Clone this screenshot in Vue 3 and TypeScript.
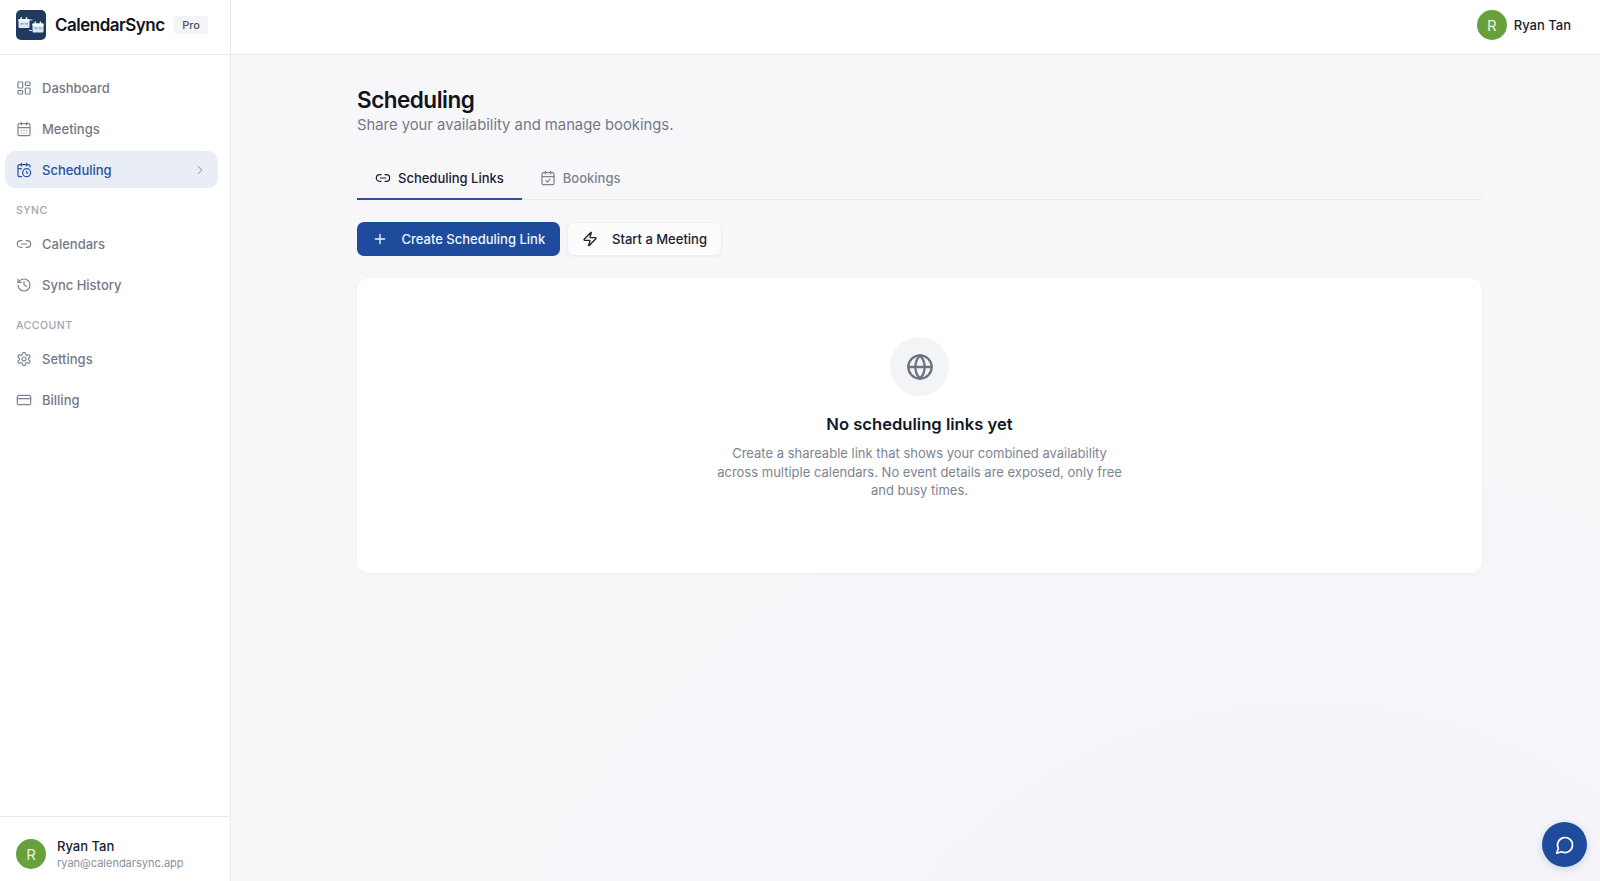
<script setup lang="ts">
interface NavItem { label: string; icon: string; active?: boolean }
interface NavGroup { title?: string; items: NavItem[] }
const groups: NavGroup[] = [
  { items: [
    { label: 'Dashboard', icon: 'dash' },
    { label: 'Meetings', icon: 'cal' },
    { label: 'Scheduling', icon: 'calclock', active: true },
  ] },
  { title: 'SYNC', items: [
    { label: 'Calendars', icon: 'link' },
    { label: 'Sync History', icon: 'history' },
  ] },
  { title: 'ACCOUNT', items: [
    { label: 'Settings', icon: 'gear' },
    { label: 'Billing', icon: 'card' },
  ] },
]
</script>

<template>
  <div class="app">
    <aside class="side">
      <div class="brand">
        <svg class="logo" viewBox="0 0 30 30" width="30" height="30">
          <rect width="30" height="30" rx="5" fill="#1e3a5f" />
          <rect x="2.5" y="9" width="11" height="9" rx="1" fill="#dbe6f2" />
          <rect x="2.5" y="9" width="11" height="2.4" fill="#fff" />
          <rect x="4.6" y="7" width="1.3" height="3" fill="#fff" />
          <rect x="9.8" y="7" width="1.3" height="3" fill="#fff" />
          <rect x="4.5" y="13" width="3" height="1.6" fill="#8ea6c2" />
          <rect x="8.8" y="13" width="3" height="1.6" fill="#8ea6c2" />
          <rect x="16.5" y="13.5" width="11" height="9" rx="1" fill="#dbe6f2" />
          <rect x="16.5" y="13.5" width="11" height="2.4" fill="#fff" />
          <rect x="18.6" y="11.5" width="1.3" height="3" fill="#fff" />
          <rect x="23.8" y="11.5" width="1.3" height="3" fill="#fff" />
          <rect x="18.5" y="17.5" width="3" height="1.6" fill="#8ea6c2" />
          <rect x="22.8" y="17.5" width="3" height="1.6" fill="#8ea6c2" />
          <path d="M14 10h2.5M13 20.5h3" fill="none" stroke="#dbe6f2" stroke-width="1" />
        </svg>
        <span class="brand-name">CalendarSync</span>
        <span class="pro">Pro</span>
      </div>
      <nav class="nav">
        <div v-for="(g, i) in groups" :key="i" class="group">
          <div v-if="g.title" class="group-title">{{ g.title }}</div>
          <a v-for="it in g.items" :key="it.label" class="item" :class="{ active: it.active }">
            <svg class="ico" viewBox="0 0 24 24" width="16" height="16">
              <template v-if="it.icon === 'dash'">
                <rect x="3" y="3" width="7" height="9" rx="1" /><rect x="14" y="3" width="7" height="5" rx="1" /><rect x="14" y="12" width="7" height="9" rx="1" /><rect x="3" y="16" width="7" height="5" rx="1" />
              </template>
              <template v-else-if="it.icon === 'cal'">
                <path d="M8 2v4M16 2v4" /><rect x="3" y="4" width="18" height="18" rx="2" /><path d="M3 10h18M8 14h.01M12 14h.01M16 14h.01M8 18h.01M12 18h.01M16 18h.01" />
              </template>
              <template v-else-if="it.icon === 'calclock'">
                <path d="M21 7.5V6a2 2 0 0 0-2-2H5a2 2 0 0 0-2 2v14a2 2 0 0 0 2 2h3.5M16 2v4M8 2v4M3 10h5" /><circle cx="16" cy="16" r="6" /><path d="M16 14v2.2l1.6 1" />
              </template>
              <template v-else-if="it.icon === 'link'">
                <path d="M9 17H7A5 5 0 0 1 7 7h2M15 7h2a5 5 0 1 1 0 10h-2M8 12h8" />
              </template>
              <template v-else-if="it.icon === 'history'">
                <path d="M3 12a9 9 0 1 0 9-9 9.75 9.75 0 0 0-6.74 2.74L3 8" /><path d="M3 3v5h5M12 7v5l4 2" />
              </template>
              <template v-else-if="it.icon === 'gear'">
                <path d="M12.22 2h-.44a2 2 0 0 0-2 2v.18a2 2 0 0 1-1 1.73l-.43.25a2 2 0 0 1-2 0l-.15-.08a2 2 0 0 0-2.73.73l-.22.38a2 2 0 0 0 .73 2.73l.15.1a2 2 0 0 1 1 1.72v.51a2 2 0 0 1-1 1.74l-.15.09a2 2 0 0 0-.73 2.73l.22.38a2 2 0 0 0 2.73.73l.15-.08a2 2 0 0 1 2 0l.43.25a2 2 0 0 1 1 1.73V20a2 2 0 0 0 2 2h.44a2 2 0 0 0 2-2v-.18a2 2 0 0 1 1-1.73l.43-.25a2 2 0 0 1 2 0l.15.08a2 2 0 0 0 2.73-.73l.22-.39a2 2 0 0 0-.73-2.73l-.15-.08a2 2 0 0 1-1-1.74v-.5a2 2 0 0 1 1-1.74l.15-.09a2 2 0 0 0 .73-2.73l-.22-.38a2 2 0 0 0-2.73-.73l-.15.08a2 2 0 0 1-2 0l-.43-.25a2 2 0 0 1-1-1.73V4a2 2 0 0 0-2-2z" /><circle cx="12" cy="12" r="3" />
              </template>
              <template v-else>
                <rect x="2" y="5" width="20" height="14" rx="2" /><path d="M2 10h20" />
              </template>
            </svg>
            <span class="label">{{ it.label }}</span>
            <svg v-if="it.active" class="chev" viewBox="0 0 24 24" width="14" height="14"><path d="m9 18 6-6-6-6" /></svg>
          </a>
        </div>
      </nav>
      <div class="side-user">
        <span class="avatar">R</span>
        <div class="who">
          <div class="who-name">Ryan Tan</div>
          <div class="who-mail">ryan@calendarsync.app</div>
        </div>
      </div>
    </aside>
    <div class="main">
      <header class="top">
        <span class="avatar">R</span>
        <span class="top-name">Ryan Tan</span>
      </header>
      <main class="content">
        <h1>Scheduling</h1>
        <p class="sub">Share your availability and manage bookings.</p>
        <div class="tabs">
          <div class="tab on">
            <svg class="ico" viewBox="0 0 24 24" width="16" height="16"><path d="M9 17H7A5 5 0 0 1 7 7h2M15 7h2a5 5 0 1 1 0 10h-2M8 12h8" /></svg>
            Scheduling Links
          </div>
          <div class="tab">
            <svg class="ico" viewBox="0 0 24 24" width="16" height="16"><path d="M8 2v4M16 2v4" /><rect x="3" y="4" width="18" height="18" rx="2" /><path d="M3 10h18M9 16l2 2 4-4" /></svg>
            Bookings
          </div>
        </div>
        <div class="actions">
          <button class="btn primary">
            <svg class="ico" viewBox="0 0 24 24" width="16" height="16"><path d="M5 12h14M12 5v14" /></svg>
            Create Scheduling Link
          </button>
          <button class="btn ghost">
            <svg class="ico" viewBox="0 0 24 24" width="16" height="16"><path d="M4 14a1 1 0 0 1-.78-1.63l9.9-10.2a.5.5 0 0 1 .86.46l-1.92 6.02A1 1 0 0 0 13 10h7a1 1 0 0 1 .78 1.63l-9.9 10.2a.5.5 0 0 1-.86-.46l1.92-6.02A1 1 0 0 0 11 14z" /></svg>
            Start a Meeting
          </button>
        </div>
        <section class="card">
          <div class="globe">
            <svg class="ico" viewBox="0 0 24 24" width="28" height="28"><circle cx="12" cy="12" r="10" /><path d="M12 2a14.5 14.5 0 0 0 0 20 14.5 14.5 0 0 0 0-20M2 12h20" /></svg>
          </div>
          <h2>No scheduling links yet</h2>
          <p>Create a shareable link that shows your combined availability across multiple calendars. No event details are exposed, only free and busy times.</p>
        </section>
      </main>
    </div>
    <button class="chat" aria-label="Chat">
      <svg class="ico" viewBox="0 0 24 24" width="20" height="20"><path d="M7.9 20A9 9 0 1 0 4 16.1L2 22z" /></svg>
    </button>
  </div>
</template>

<style>
html, body { margin: 0; }
</style>

<style scoped>
.app {
  display: flex;
  height: 881px;
  overflow: hidden;
  font-family: Inter, "Liberation Sans", sans-serif;
  background:
    radial-gradient(circle 507px at 1307px 1210px, #f5f5f9 99.5%, transparent 100%),
    radial-gradient(circle 800px at 1250px 1250px, #f6f6fa 99.7%, transparent 100%),
    #f7f7fa;
  color: #111827;
}
.ico, .chev {
  fill: none;
  stroke: currentColor;
  stroke-width: 2;
  stroke-linecap: round;
  stroke-linejoin: round;
  flex: none;
}
.side {
  width: 231px;
  flex: none;
  box-sizing: border-box;
  display: flex;
  flex-direction: column;
  background: #fff;
  border-right: 1px solid #e9ebef;
}
.brand {
  height: 55px;
  box-sizing: border-box;
  display: flex;
  align-items: center;
  padding: 0 16px 4px;
  border-bottom: 1px solid #e9ebef;
}
.logo { flex: none; margin-right: 9px; }
.brand-name { font-size: 17px; font-weight: 600; letter-spacing: -0.5px; color: #0f1420; }
.pro {
  margin-left: 9px;
  padding: 0 8.5px;
  height: 18px;
  line-height: 18px;
  font-size: 11px;
  font-weight: 500;
  color: #4b5563;
  background: #f3f4f6;
  border-radius: 3px;
}
.nav { flex: 1; padding: 14px 5px 0; }
.group-title {
  font-size: 10.5px;
  font-weight: 500;
  letter-spacing: 0.5px;
  color: #a0a5b0;
  line-height: 14px;
  padding: 10px 11px 3px;
}
.group { display: flex; flex-direction: column; gap: 4px; margin-bottom: 6px; }
.item {
  height: 37px;
  display: flex;
  align-items: center;
  gap: 10.5px;
  padding: 0 11px 0 10.5px;
  box-sizing: border-box;
  margin-right: 7px;
  border-radius: 10px;
  font-size: 13px;
  font-weight: 500;
  color: #737a87;
}
.item .ico { color: #7d8491; stroke-width: 1.8; }
.item .label { flex: 1; }
.item.active { background: #e9edf5; color: #2a5298; }
.item.active .ico { color: #2a5298; }
.chev { color: #7d8491; stroke-width: 1.6; margin-right: 0; }
.side-user {
  height: 65px;
  box-sizing: border-box;
  display: flex;
  align-items: center;
  gap: 11px;
  padding: 10px 16px 0;
  border-top: 1px solid #e9ebef;
}
.avatar {
  width: 30px;
  height: 30px;
  flex: none;
  border-radius: 50%;
  background: #68a03c;
  color: #e8f2dd;
  font-size: 15px;
  display: flex;
  align-items: center;
  justify-content: center;
}
.who-name { font-size: 13px; font-weight: 500; line-height: 17px; color: #1a2130; }
.who-mail { font-size: 11px; line-height: 16px; color: #8a909c; }
.main { flex: 1; min-width: 0; display: flex; flex-direction: column; }
.top {
  height: 55px;
  box-sizing: border-box;
  flex: none;
  display: flex;
  align-items: center;
  justify-content: flex-end;
  gap: 7px;
  padding: 0 29px 4px 0;
  background: #fff;
  border-bottom: 1px solid #e9ebef;
}
.top-name { font-size: 13px; font-weight: 500; color: #1a2130; }
.content { padding: 31px 118px 0 126px; }
h1 { margin: 0; font-size: 22.5px; line-height: 28px; font-weight: 600; letter-spacing: -0.5px; color: #0f1420; }
.sub { margin: 0; font-size: 14.8px; line-height: 22px; color: #737a87; }
.tabs {
  display: flex;
  margin-top: 22px;
  border-bottom: 1px solid #e8e9ee;
}
.tab {
  height: 42px;
  box-sizing: border-box;
  display: flex;
  align-items: center;
  gap: 7px;
  padding: 0 18px;
  font-size: 13px;
  font-weight: 500;
  color: #7d8491;
  border-bottom: 2px solid transparent;
  margin-bottom: -1px;
}
.tab.on { color: #1a2130; border-bottom-color: #2b5296; }
.tab .ico { stroke-width: 1.8; }
.actions { display: flex; gap: 7px; margin-top: 22px; }
.btn {
  height: 34px;
  box-sizing: border-box;
  display: flex;
  align-items: center;
  border-radius: 7px;
  font-family: inherit;
  font-size: 13px;
  font-weight: 500;
  cursor: pointer;
}
.primary { width: 203px; padding: 0 0 0 15px; gap: 13.5px; background: #1e4b9c; color: #f1f5fb; border: none; }
.ghost { width: 155px; padding: 0 0 0 14px; gap: 14px; background: #fcfcfd; color: #1a2130; border: 1px solid #eceef2; box-shadow: 0 1px 2px rgba(0,0,0,.04); }
.card {
  margin-top: 22px;
  height: 295px;
  box-sizing: border-box;
  padding-top: 59px;
  background: #fff;
  border-radius: 12px;
  box-shadow: 0 1px 3px rgba(17,24,39,.04);
  display: flex;
  flex-direction: column;
  align-items: center;
}
.globe {
  width: 59px;
  height: 59px;
  border-radius: 50%;
  background: #f3f4f6;
  color: #6b7280;
  display: flex;
  align-items: center;
  justify-content: center;
}
h2 { margin: 16px 0 0; font-size: 16.6px; line-height: 24px; font-weight: 600; color: #111827; }
.card p {
  margin: 8px 0 0;
  width: 412px;
  text-align: center;
  font-size: 13px;
  line-height: 18.5px;
  color: #7d8491;
}
.chat {
  position: absolute;
  right: 13px;
  bottom: 14px;
  width: 45px;
  height: 45px;
  border-radius: 50%;
  border: none;
  background: #1e4b9c;
  color: #fff;
  display: flex;
  align-items: center;
  justify-content: center;
  box-shadow: 0 2px 8px rgba(30,75,156,.2);
}
</style>
